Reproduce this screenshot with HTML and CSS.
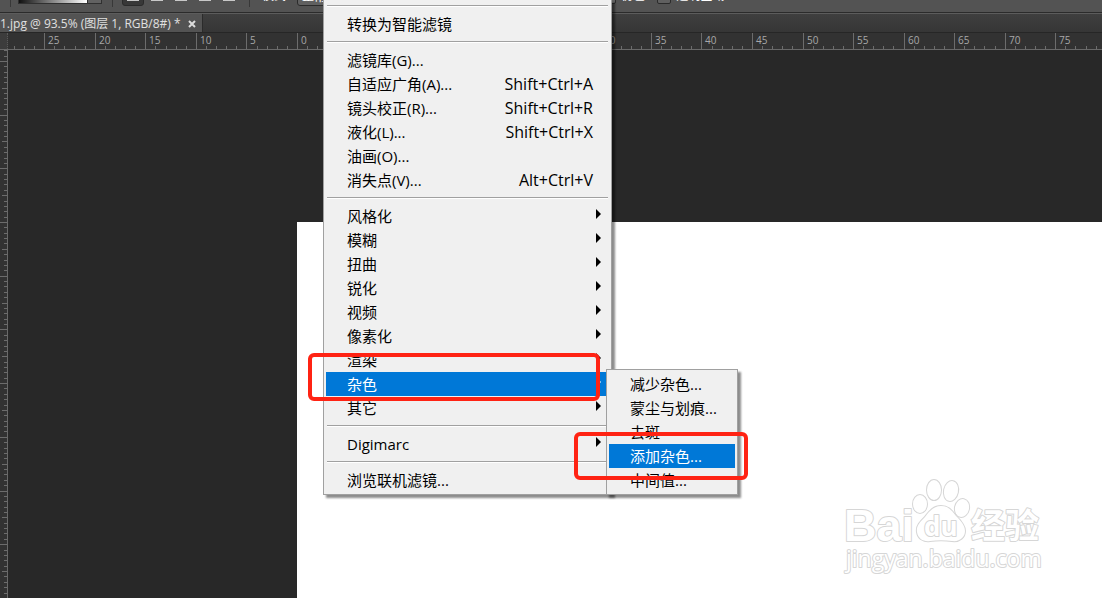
FILE: index.html
```html
<!DOCTYPE html>
<html lang="zh-CN">
<head>
<meta charset="utf-8">
<meta name="viewport" content="width=device-width, initial-scale=1">
<title>1.jpg @ 93.5%</title>
<link rel="stylesheet" href="styles.css">
</head>
<body>
<div class="app">
  <header class="options">
    <div class="options-row">
      <span class="divider"></span>
      <button class="gradient" type="button" aria-label="编辑渐变"></button>
      <button class="gradient-drop" type="button" aria-label="渐变列表"></button>
      <span class="divider"></span>
      <div class="kinds">
        <button class="kind kind-on" type="button" aria-label="线性渐变"><span class="swatch"></span></button>
        <button class="kind" type="button" aria-label="径向渐变"><span class="swatch"></span></button>
        <button class="kind" type="button" aria-label="角度渐变"><span class="swatch"></span></button>
        <button class="kind" type="button" aria-label="对称渐变"><span class="swatch"></span></button>
        <button class="kind" type="button" aria-label="菱形渐变"><span class="swatch"></span></button>
      </div>
      <span class="divider"></span>
      <label class="mode" for="mode">模式:</label>
      <select class="mode-select" id="mode"><option>正常</option></select>
      <label class="check" for="dither"><input id="dither" type="checkbox">仿色</label>
      <label class="check" for="alpha"><input id="alpha" type="checkbox">透明区域</label>
    </div>
  </header>

  <nav class="tabs">
    <div class="tab">
      <span>1.jpg @ 93.5% (图层 1, RGB/8#) *</span>
      <button class="tab-close" type="button" aria-label="关闭">
        <svg width="8" height="8" viewBox="0 0 8 8"><path d="M1 1L7 7M7 1L1 7" stroke="#ddd" stroke-width="2"/></svg>
      </button>
    </div>
  </nav>

  <div class="ruler-row">
    <div class="corner"></div>
    <svg class="ruler-x" id="ruler-x" aria-hidden="true"></svg>
  </div>

  <main class="work">
    <svg class="ruler-y" id="ruler-y" aria-hidden="true"></svg>
    <div class="stage"><div class="paper">
      <svg class="mark" width="204" height="100" viewBox="842 476 204 100">
        <g fill="#fff" stroke="#d6d6d6" stroke-width="2" paint-order="stroke" stroke-linejoin="round">
          <text class="mark-bai" x="844" y="541">Bai</text>
          <ellipse cx="920" cy="504" rx="7" ry="9"/>
          <ellipse cx="934" cy="490" rx="7" ry="10"/>
          <ellipse cx="951" cy="491" rx="7" ry="10" transform="rotate(12 951 491)"/>
          <ellipse cx="962" cy="508" rx="7" ry="9" transform="rotate(12 962 508)"/>
          <path d="M941 506C933 506 929 512 925 517C920 522 916 526 917 532C918 539 924 542 930 541C937 540 945 540 952 541C960 542 965 537 965 531C965 525 960 520 956 516C952 511 949 506 941 506Z"/>
          <text class="mark-du" x="924" y="536">du</text>
          <text class="mark-cn" x="971" y="538">经验</text>
          <text class="mark-url" x="846" y="567">jingyan.baidu.com</text>
        </g>
      </svg>
    </div></div>
  </main>

  <div class="menu">
    <hr>
    <button class="item" type="button">转换为智能滤镜</button>
    <hr>
    <button class="item" type="button">滤镜库(G)...</button>
    <button class="item" type="button">自适应广角(A)...<kbd>Shift+Ctrl+A</kbd></button>
    <button class="item" type="button">镜头校正(R)...<kbd>Shift+Ctrl+R</kbd></button>
    <button class="item" type="button">液化(L)...<kbd>Shift+Ctrl+X</kbd></button>
    <button class="item" type="button">油画(O)...</button>
    <button class="item" type="button">消失点(V)...<kbd>Alt+Ctrl+V</kbd></button>
    <hr>
    <button class="item more" type="button">风格化</button>
    <button class="item more" type="button">模糊</button>
    <button class="item more" type="button">扭曲</button>
    <button class="item more" type="button">锐化</button>
    <button class="item more" type="button">视频</button>
    <button class="item more" type="button">像素化</button>
    <button class="item more" type="button">渲染</button>
    <button class="item more active" type="button">杂色</button>
    <button class="item more" type="button">其它</button>
    <hr>
    <button class="item more" type="button">Digimarc</button>
    <hr>
    <button class="item" type="button">浏览联机滤镜...</button>
  </div>

  <div class="menu submenu">
    <button class="item" type="button">减少杂色...</button>
    <button class="item" type="button">蒙尘与划痕...</button>
    <button class="item" type="button">去斑</button>
    <button class="item active" type="button">添加杂色...</button>
    <button class="item" type="button">中间值...</button>
  </div>

  <div class="callout callout-noise"></div>
  <div class="callout callout-add"></div>
</div>
<script src="rulers.js"></script>
</body>
</html>
```

FILE: styles.css
```css
* { box-sizing: border-box; }

body {
  margin: 0;
  background: #282828;
  font-family: "Open Sans", "Noto Sans CJK SC", sans-serif;
}

button { font: inherit; border: 0; padding: 0; background: none; }

.app {
  position: relative;
  display: flex;
  flex-direction: column;
  height: 100vh;
  overflow: hidden;
}

/* options bar */
.options {
  flex: none;
  height: 13px;
  overflow: hidden;
  background: #535353;
  border-bottom: 1px solid #2b2b2b;
}
.options-row {
  display: flex;
  align-items: center;
  height: 30px;
  margin-top: -18px;
  padding-left: 10px;
  color: #fff;
  font-size: 12px;
  white-space: nowrap;
}
.divider { flex: none; width: 1px; height: 20px; background: #383838; }
.gradient {
  width: 70px;
  height: 14px;
  margin-left: 7px;
  border: 1px solid #303030;
  background: linear-gradient(90deg, #111, #fff);
}
.gradient-drop { width: 14px; height: 14px; border: 1px solid #303030; border-left: 0; background: #626262; }
.gradient-drop + .divider { margin-left: 10px; }
.kinds { display: flex; gap: 2px; margin: 0 9px; }
.kind {
  display: flex;
  align-items: center;
  justify-content: center;
  width: 22px;
  height: 18px;
  border-radius: 3px;
}
.kind-on { background: #383838; border: 1px solid #2b2b2b; }
.swatch { width: 12px; height: 8px; background: #c8c8c8; }
.mode { margin: -4px 8px 0 12px; }
.mode-select {
  width: 120px;
  height: 18px;
  margin-right: 185px;
  border: 1px solid #2b2b2b;
  border-radius: 3px;
  background: #606060;
  color: #fff;
  font-size: 12px;
}
.check { display: flex; align-items: center; gap: 5px; margin: -4px 12px 0 0; }
.check input {
  appearance: none;
  width: 14px;
  height: 14px;
  margin: 4px 0 0;
  border: 1px solid #2b2b2b;
  border-radius: 2px;
  background: #606060;
}

/* document tab */
.tabs {
  flex: none;
  display: flex;
  height: 20px;
  border-top: 1px solid #5c5c5c;
  border-bottom: 1px solid #262626;
  background: linear-gradient(#3f3f3f, #363636);
}
.tab {
  display: flex;
  align-items: center;
  gap: 7px;
  padding: 1px 6px 0 0;
  border-right: 1px solid #2b2b2b;
  background: #535353;
  color: #e0e0e0;
  font-size: 12px;
  line-height: 17px;
  white-space: nowrap;
}
.tab-close { display: flex; }

/* rulers */
.ruler-row { flex: none; display: flex; height: 17px; background: #323232; border-bottom: 1px solid #696969; }
.corner { flex: none; width: 8px; background: #3c3c3c; border-right: 1px dotted #5a5a5a; }
.ruler-x { flex: 1; min-width: 0; height: 16px; overflow: hidden; }
.ruler-x rect, .ruler-y rect { fill: #6c6c6c; }
.ruler-x text { fill: #a8a8a8; font-size: 10px; }
.work { flex: 1; min-height: 0; display: flex; }
.ruler-y { flex: none; width: 8px; height: 100%; background: #323232; border-right: 1px solid #696969; overflow: hidden; }

.stage { flex: 1; display: flex; padding: 172px 0 0 289px; }
.paper { flex: 1; display: flex; align-items: flex-end; justify-content: flex-end; padding: 0 56px 22px 0; background: #fff; }
.mark { flex: none; }
.mark-bai { font: bold 45px "Liberation Sans", sans-serif; }
.mark-du { font: bold 26px "Open Sans", sans-serif; }
.mark-cn { font: bold 34px "Noto Sans CJK SC", sans-serif; }
.mark-url { font: 23px "Open Sans", sans-serif; }

/* menus */
.menu {
  position: absolute;
  top: 0;
  left: 323px;
  width: 289px;
  padding: 0 2px 2px;
  border: 1px solid #a0a0a0;
  border-top: 0;
  background: #f0f0f0;
  box-shadow: 3px 3px 2px rgba(0, 0, 0, 0.45);
}
.menu hr {
  height: 2px;
  margin: 5px 1px;
  border: 0;
  border-top: 1px solid #a0a0a0;
  background: #fff;
}
.item {
  position: relative;
  display: flex;
  align-items: center;
  justify-content: space-between;
  width: 100%;
  height: 24px;
  padding: 0 16px 0 21px;
  color: #000;
  font-size: 15px;
  line-height: 22px;
  white-space: nowrap;
}
.item kbd { font: inherit; font-size: 16px; }
.more::after {
  content: "";
  margin: 0 -8px 5px 0;
  border: 5px solid transparent;
  border-left-color: #000;
  border-right: 0;
}
.active { background: #0078d7; color: #fff; }
.active::after { border-left-color: #fff; }
.submenu { top: 369px; left: 606px; width: 132px; padding-top: 2px; border-top: 1px solid #a0a0a0; }

/* red outlines around the chosen commands */
.callout { position: absolute; border: 4px solid #ff2313; border-radius: 6px; }
.callout-noise { top: 353px; left: 308px; width: 292px; height: 48px; }
.callout-add { top: 432px; left: 574px; width: 174px; height: 48px; }
```

FILE: rulers.js
```js
const NS = "http://www.w3.org/2000/svg";
const ORIGIN_X = 289;
const ORIGIN_Y = 172;
const STEP_X = 10.11;
const STEP_Y = 5.37;

function bar(svg, x, y, width, height) {
  const el = document.createElementNS(NS, "rect");
  Object.entries({ x, y, width, height }).forEach(([k, v]) => el.setAttribute(k, v));
  svg.appendChild(el);
}

const rulerX = document.getElementById("ruler-x");
const lastX = Math.ceil((rulerX.clientWidth - ORIGIN_X) / STEP_X);
for (let n = -28; n < lastX; n++) {
  const x = Math.round(ORIGIN_X + n * STEP_X);
  const major = n % 5 === 0;
  bar(rulerX, x, major ? 0 : 13, 1, major ? 16 : 3);
  if (major) {
    const label = document.createElementNS(NS, "text");
    label.setAttribute("x", x + 4);
    label.setAttribute("y", 11);
    label.textContent = Math.abs(n);
    rulerX.appendChild(label);
  }
}

const rulerY = document.getElementById("ruler-y");
const lastY = Math.ceil((rulerY.clientHeight - ORIGIN_Y) / STEP_Y);
for (let n = -32; n < lastY; n++) {
  const y = Math.round(ORIGIN_Y + n * STEP_Y);
  const width = n % 10 === 0 ? 8 : n % 5 === 0 ? 5 : 3;
  bar(rulerY, 7 - width, y, width, 1);
}
```
